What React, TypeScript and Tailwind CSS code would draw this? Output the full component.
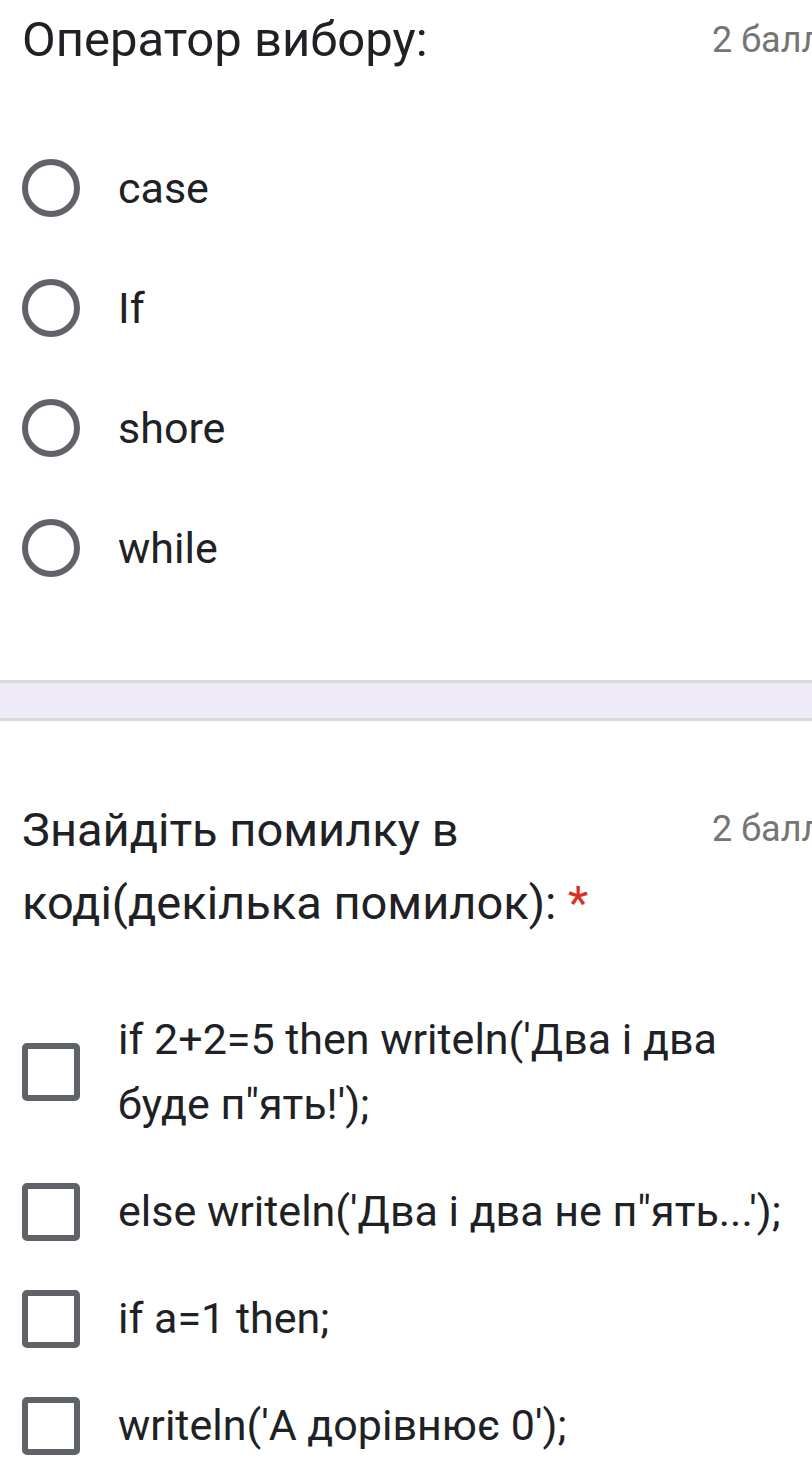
import { Fragment } from "react";

const choices = ["case", "If", "shore", "while"];

const boxes = [
  "if 2+2=5 then writeln('Два і два буде п\"ять!');",
  "else writeln('Два і два не п\"ять...');",
  "if a=1 then;",
  "writeln('А дорівнює 0');",
];

const Radio = () => (
  <div className="w-[58px] h-[58px] shrink-0 rounded-full border-[6px] border-[#5f6368]" />
);

const Checkbox = () => (
  <div className="w-[58px] h-[58px] shrink-0 rounded-[5px] border-[6px] border-[#5f6368]" />
);

const Points = () => (
  <div className="shrink-0 text-[36px] text-[#757575] whitespace-nowrap">2 балл</div>
);

export default function App() {
  return (
    <div className="w-[812px] h-[1467px] overflow-hidden bg-white text-[#202124] font-['Roboto',sans-serif]">
      <section className="pl-[22px]">
        <div className="flex items-start justify-between leading-[80px]">
          <h2 className="text-[49px]">Оператор вибору:</h2>
          <div className="w-[100px] leading-[80px]">
            <Points />
          </div>
        </div>
        <div className="pt-[48px] pb-[72px]">
          {choices.map((c) => (
            <div key={c} className="h-[120px] flex items-center gap-[38px]">
              <Radio />
              <span className="text-[43px]">{c}</span>
            </div>
          ))}
        </div>
      </section>

      <div className="h-[41px] border-y-[3px] border-[#d9d9d9] bg-[#eeeaf8]" />

      <section className="pl-[22px] pt-[72px]">
        <div className="flex items-start justify-between">
          <h2 className="w-[640px] text-[47px] leading-[73px]">
            Знайдіть помилку в коді(декілька помилок): <span className="text-[#d93025]">*</span>
          </h2>
          <div className="w-[100px] leading-[73px]">
            <Points />
          </div>
        </div>
        <div className="pt-[47px]">
          {boxes.map((b, i) => (
            <Fragment key={i}>
              <div className="flex items-center gap-[38px] py-[21px]">
                <Checkbox />
                <span className="text-[43px] leading-[65px]">{b}</span>
              </div>
            </Fragment>
          ))}
        </div>
      </section>
    </div>
  );
}
